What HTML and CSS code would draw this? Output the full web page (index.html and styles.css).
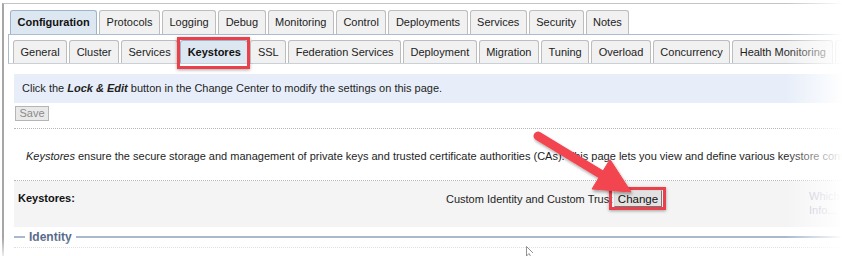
FILE: index.html
```html
<!DOCTYPE html>
<html lang="en">
<head>
<meta charset="utf-8">
<title>Keystores</title>
<link rel="stylesheet" href="styles.css">
</head>
<body>
<div class="frame">
  <div class="tabs-top">
    <div class="tab selected">Configuration</div>
    <div class="tab">Protocols</div>
    <div class="tab">Logging</div>
    <div class="tab">Debug</div>
    <div class="tab">Monitoring</div>
    <div class="tab">Control</div>
    <div class="tab">Deployments</div>
    <div class="tab">Services</div>
    <div class="tab">Security</div>
    <div class="tab">Notes</div>
  </div>
  <div class="subpanel">
    <div class="tabs-sub">
      <div class="tab">General</div>
      <div class="tab">Cluster</div>
      <div class="tab">Services</div>
      <div class="tab selected marked">Keystores</div>
      <div class="tab">SSL</div>
      <div class="tab">Federation Services</div>
      <div class="tab">Deployment</div>
      <div class="tab">Migration</div>
      <div class="tab">Tuning</div>
      <div class="tab">Overload</div>
      <div class="tab">Concurrency</div>
      <div class="tab">Health Monitoring</div>
      <div class="tab">Server Start</div>
    </div>
  </div>
  <div class="content">
    <div class="info">Click the <b><i>Lock &amp; Edit</i></b> button in the Change Center to modify the settings on this page.</div>
    <div class="actions"><button class="btn-save" disabled>Save</button></div>
    <div class="desc"><i>Keystores</i> ensure the secure storage and management of private keys and trusted certificate authorities (CAs). This page lets you view and define various keystore configurations.</div>
    <div class="field-row">
      <div class="field-label">Keystores:</div>
      <div class="field-value">
        <span>Custom Identity and Custom Trust</span>
        <button class="btn-change">Change</button>
      </div>
      <div class="field-help">Which<br>Info...</div>
    </div>
    <div class="legend"><span class="legend-text">Identity</span></div>
    <div class="dotted"></div>
  </div>
</div>
<div class="fade"></div>
<svg class="annot" width="842" height="256" viewBox="0 0 842 256">
  <defs>
    <filter id="sh" x="-20%" y="-20%" width="140%" height="140%">
      <feDropShadow dx="1" dy="2" stdDeviation="1.5" flood-color="#000" flood-opacity="0.35"/>
    </filter>
  </defs>
  <g filter="url(#sh)" fill="#f2454f" stroke="#f2454f">
    <line x1="538" y1="136" x2="603" y2="175.5" stroke-width="9" stroke-linecap="round"/>
    <polygon points="631,192 592,189 610,159.5" stroke-width="1" stroke-linejoin="round"/>
  </g>
  <path class="cursor" d="M526.5 246.5 L526.5 256 L529 253.5 L531 257 M526.5 246.5 L533 253" fill="none" stroke="#777" stroke-width="0.8"/>
</svg>
</body>
</html>
```
FILE: styles.css
```css
html, body {
  margin: 0;
  padding: 0;
  background: #fff;
  overflow: hidden;
  width: 842px;
  height: 256px;
}
body {
  font-family: "Liberation Sans", Arial, sans-serif;
  font-size: 11px;
  color: #1e1e1e;
  position: relative;
}
.frame {
  margin: 3px 0 0 2px;
  border-top: 1px solid #c4c4c4;
  border-left: 2px solid #a6a6a6;
  padding-top: 6px;
  height: 246px;
  overflow: hidden;
}
.tabs-top {
  display: flex;
  gap: 2px;
  padding-left: 6px;
  white-space: nowrap;
}
.tab {
  flex: none;
  height: 23px;
  line-height: 23px;
  padding: 0 6.5px;
  border: 1px solid #bdbdbd;
  border-bottom: none;
  border-radius: 3px 3px 0 0;
  background: #f1f1f1;
  color: #222;
  position: relative;
}
.tab.selected {
  background: #dde7f1;
  border-color: #9fb4c9;
  font-weight: bold;
  color: #111;
}
.subpanel {
  margin-left: 4px;
  border-top: 1px solid #a9bcd0;
  border-left: 1px solid #a9bcd0;
  border-bottom: 1px solid #c9d0d8;
  padding: 5px 0 0 4px;
}
.tabs-sub {
  display: flex;
  gap: 2px;
  white-space: nowrap;
}
.tabs-sub .tab {
  height: 22px;
  line-height: 22px;
}
.marked::after {
  content: "";
  position: absolute;
  top: -4px;
  left: -4px;
  right: -3px;
  bottom: -6px;
  border: 3px solid #ea404b;
  box-shadow: 0 1px 3px rgba(0,0,0,0.35);
}
.content {
  margin: 10px 0 0 10px;
}
.info {
  height: 29px;
  line-height: 29px;
  background: #e7eef9;
  padding-left: 8px;
  white-space: nowrap;
}
.actions {
  padding: 3px 0 5px 1px;
  height: 17px;
  border-bottom: 1px dotted #b8b8b8;
}
.btn-save {
  display: block;
  width: 34px;
  height: 15px;
  padding: 0;
  margin: 0;
  font-family: "Liberation Sans", Arial, sans-serif;
  font-size: 11px;
  line-height: 13px;
  color: #8a8a8a;
  background: #e9e9e9;
  border: 1px solid #b5b5b5;
}
.desc {
  padding: 20px 0 0 12px;
  height: 31px;
  line-height: 14px;
  white-space: nowrap;
  overflow: hidden;
  border-bottom: 1px dotted #b8b8b8;
}
.field-row {
  display: flex;
  align-items: flex-start;
  background: #f4f4f4;
  height: 46px;
  padding-left: 4px;
  white-space: nowrap;
}
.field-label {
  width: 428px;
  font-weight: bold;
  padding-top: 10px;
  line-height: 14px;
  color: #111;
}
.field-value {
  width: 363px;
  display: flex;
  align-items: flex-start;
  padding-top: 11px;
  line-height: 14px;
}
.field-value span {
  width: 168px;
  overflow: hidden;
}
.btn-change {
  position: relative;
  margin: -2px 0 0 0;
  width: 48px;
  height: 17px;
  padding: 0;
  font-family: "Liberation Sans", Arial, sans-serif;
  font-size: 11.5px;
  line-height: 14px;
  color: #111;
  background: #e2e2e2;
  border: 1px solid;
  border-color: #d8d8d8 #777 #777 #d8d8d8;
}
.btn-change::after {
  content: "";
  position: absolute;
  top: -4px;
  left: -6px;
  right: -5px;
  bottom: -4px;
  border: 3px solid #ea404b;
  box-shadow: 0 1px 3px rgba(0,0,0,0.35);
}
.field-help {
  padding-top: 8px;
  line-height: 14px;
  color: #b4b8cc;
}
.legend {
  display: flex;
  align-items: center;
  margin-top: 3px;
  height: 14px;
}
.legend::before {
  content: "";
  width: 11px;
  height: 2px;
  background: #a9b9cd;
}
.legend::after {
  content: "";
  flex: 1;
  height: 2px;
  background: #a9b9cd;
}
.legend-text {
  padding: 0 4px;
  font-size: 12px;
  font-weight: bold;
  color: #56698a;
}
.dotted {
  margin-top: 3px;
  border-top: 1px dotted #c8c8c8;
}
.fade {
  position: absolute;
  inset: 0;
  pointer-events: none;
  background:
    linear-gradient(to right, rgba(255,255,255,0) 785px, rgba(255,255,255,0.75) 830px, #fff 842px),
    linear-gradient(to bottom, rgba(255,255,255,0) 238px, rgba(255,255,255,0.8) 256px);
}
.annot {
  position: absolute;
  left: 0;
  top: 0;
  pointer-events: none;
}
```
